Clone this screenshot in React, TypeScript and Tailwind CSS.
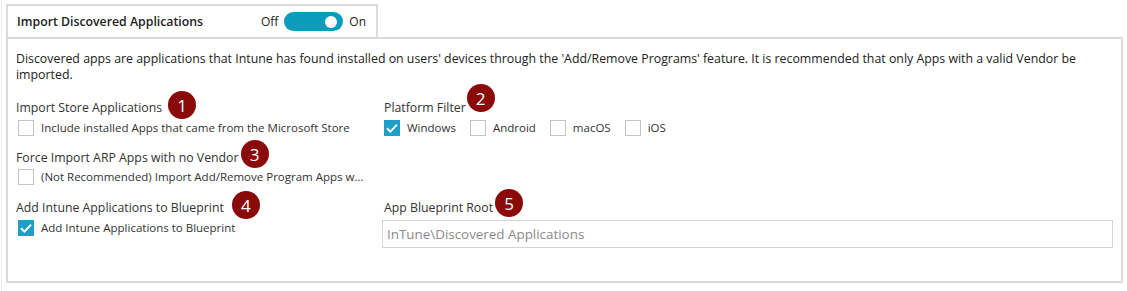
import React from "react";

const font = { fontFamily: '"Open Sans", "Noto Sans", Arial, sans-serif' };

function Badge({ n, className }: { n: number; className: string }) {
  return (
    <span
      className={
        "absolute flex h-[28px] w-[28px] items-center justify-center rounded-full bg-[#8a0a0a] text-[17px] leading-none text-white " +
        className
      }
    >
      {n}
    </span>
  );
}

function Check() {
  return (
    <span className="flex h-[16px] w-[16px] shrink-0 items-center justify-center border border-[#1f9fc8] bg-[#1f9fc8]">
      <svg width="14" height="14" viewBox="0 0 14 14" fill="none">
        <path d="M2 7.2 L5.4 10.6 L12 3.6" stroke="white" strokeWidth="2" />
      </svg>
    </span>
  );
}

function Box() {
  return <span className="h-[16px] w-[16px] shrink-0 border border-[#c4c4c4] bg-white" />;
}

function CheckItem({ checked, label }: { checked?: boolean; label: string }) {
  return (
    <div className="flex items-center gap-[7px] text-[11.5px] leading-[16px] text-[#333]">
      {checked ? <Check /> : <Box />}
      <span>{label}</span>
    </div>
  );
}

function Label({ text, n, badgeClass }: { text: string; n: number; badgeClass: string }) {
  return (
    <div className="text-[12.3px] leading-[16px] text-[#333]">
      <span className="relative inline-block">
        {text}
        <Badge n={n} className={badgeClass} />
      </span>
    </div>
  );
}

export default function App() {
  return (
    <div style={font} className="h-[291px] w-[1127px] bg-white">
      <div className="ml-[1px] h-full border-l border-[#ececec] pl-[4px] pt-[4px]">
        <div className="flex h-[33px] w-[372px] items-center border-x-2 border-t-2 border-[#dcdcdc] pl-[9px] pr-[10px]">
          <span className="mt-[2px] text-[12.3px] font-semibold text-[#222]">Import Discovered Applications</span>
          <div className="ml-auto flex items-center gap-[6px] text-[12px] text-[#222]">
            <span>Off</span>
            <span className="relative flex h-[19px] w-[59px] items-center rounded-full bg-[#0a9cbd]">
              <span className="absolute right-[6px] h-[12px] w-[12px] rounded-full bg-white" />
            </span>
            <span>On</span>
          </div>
        </div>
        <div className="mr-[4px] h-[246px] border-2 border-[#dadada] pl-[8px] pt-[12px] pr-[8px]">
          <p className="text-[12.35px] leading-[16px] text-[#222]">
            Discovered apps are applications that Intune has found installed on users' devices through the 'Add/Remove Programs' feature. It is recommended that only Apps with a valid Vendor be imported.
          </p>
          <div className="mt-[17px] grid grid-cols-[368px_1fr]">
            <div className="flex flex-col">
              <Label text="Import Store Applications" n={1} badgeClass="left-[calc(100%+6px)] top-[-9px]" />
              <div className="mt-[4px] pl-[2px]">
                <CheckItem label="Include installed Apps that came from the Microsoft Store" />
              </div>
              <div className="mt-[14px]">
                <Label text="Force Import ARP Apps with no Vendor" n={3} badgeClass="left-[calc(100%+2px)] top-[-10px]" />
              </div>
              <div className="mt-[3px] pl-[2px]">
                <CheckItem label="(Not Recommended) Import Add/Remove Program Apps w..." />
              </div>
              <div className="mt-[15px]">
                <Label text="Add Intune Applications to Blueprint" n={4} badgeClass="left-[calc(100%+8px)] top-[-9px]" />
              </div>
              <div className="mt-[4px] pl-[2px]">
                <CheckItem checked label="Add Intune Applications to Blueprint" />
              </div>
            </div>
            <div className="flex flex-col">
              <Label text="Platform Filter" n={2} badgeClass="left-[calc(100%+1px)] top-[-16px]" />
              <div className="mt-[4px] flex items-center gap-[14px]">
                <CheckItem checked label="Windows" />
                <CheckItem label="Android" />
                <CheckItem label="macOS" />
                <CheckItem label="iOS" />
              </div>
              <div className="mt-[64px]">
                <Label text="App Blueprint Root" n={5} badgeClass="left-[calc(100%+2px)] top-[-11px]" />
              </div>
              <div className="mt-[4px] ml-[-2px] flex h-[28px] w-[731px] items-center border border-[#d4d4d4] pl-[4px] text-[13.4px] text-[#8a8a8a]">
                InTune\Discovered Applications
              </div>
            </div>
          </div>
        </div>
      </div>
    </div>
  );
}
